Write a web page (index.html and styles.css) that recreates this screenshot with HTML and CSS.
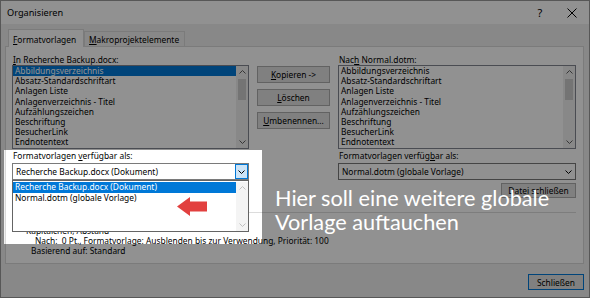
FILE: index.html
```html
<!DOCTYPE html>
<html lang="de">
<head>
<meta charset="utf-8">
<title>Organisieren</title>
<link rel="stylesheet" href="styles.css">
</head>
<body>
<div class="dialog">
  <div class="titlebar">
    <span class="title">Organisieren</span>
    <span class="tb-help">?</span>
    <span class="tb-close"><svg width="10" height="10" viewBox="0 0 10 10"><path d="M0.5 0.5 L9.5 9.5 M9.5 0.5 L0.5 9.5" stroke="#000" stroke-width="1" fill="none"/></svg></span>
  </div>
  <div class="tabstrip">
    <div class="tab active"><u>F</u>ormatvorlagen</div>
    <div class="tab"><u>M</u>akroprojektelemente</div>
  </div>
  <div class="tabpage">
    <div class="cols">
      <div class="col">
        <div class="label"><u>I</u>n Recherche Backup.docx:</div>
        <div class="listbox">
          <ul class="items">
            <li class="sel">Abbildungsverzeichnis</li>
            <li>Absatz-Standardschriftart</li>
            <li>Anlagen Liste</li>
            <li>Anlagenverzeichnis - Titel</li>
            <li>Aufzählungszeichen</li>
            <li>Beschriftung</li>
            <li>BesucherLink</li>
            <li>Endnotentext</li>
          </ul>
          <div class="vscroll">
            <span class="sarrow"><svg width="7" height="4" viewBox="0 0 7 4"><path d="M0.5 3.5 L3.5 0.5 L6.5 3.5" stroke="#606060" fill="none"/></svg></span>
            <span class="thumb"></span>
            <span class="strack"></span>
            <span class="sarrow"><svg width="7" height="4" viewBox="0 0 7 4"><path d="M0.5 0.5 L3.5 3.5 L6.5 0.5" stroke="#606060" fill="none"/></svg></span>
          </div>
        </div>
        <div class="label label2">Formatvorlagen <u>v</u>erfügbar als:</div>
        <div class="combo open">
          <span class="combo-text">Recherche Backup.docx (Dokument)</span>
          <span class="combo-btn"><svg width="7" height="4" viewBox="0 0 7 4"><path d="M0.5 0.5 L3.5 3.5 L6.5 0.5" stroke="#000" fill="none"/></svg></span>
          <div class="popup">
            <ul class="items">
              <li class="sel">Recherche Backup.docx (Dokument)</li>
              <li>Normal.dotm (globale Vorlage)</li>
            </ul>
            <div class="vscroll light">
              <span class="sarrow"><svg width="7" height="4" viewBox="0 0 7 4"><path d="M0.5 3.5 L3.5 0.5 L6.5 3.5" stroke="#c0c0c0" fill="none"/></svg></span>
              <span class="strack"></span>
              <span class="sarrow"><svg width="7" height="4" viewBox="0 0 7 4"><path d="M0.5 0.5 L3.5 3.5 L6.5 0.5" stroke="#c0c0c0" fill="none"/></svg></span>
            </div>
          </div>
        </div>
        <div class="btnrow"><span class="btn small">Datei schließen</span></div>
      </div>
      <div class="mid">
        <span class="btn"><u>K</u>opieren -&gt;</span>
        <span class="btn"><u>L</u>öschen</span>
        <span class="btn"><u>U</u>mbenennen...</span>
      </div>
      <div class="col">
        <div class="label">Nac<u>h</u> Normal.dotm:</div>
        <div class="listbox">
          <ul class="items">
            <li>Abbildungsverzeichnis</li>
            <li>Absatz-Standardschriftart</li>
            <li>Anlagen Liste</li>
            <li>Anlagenverzeichnis - Titel</li>
            <li>Aufzählungszeichen</li>
            <li>Beschriftung</li>
            <li>BesucherLink</li>
            <li>Endnotentext</li>
          </ul>
          <div class="vscroll">
            <span class="sarrow"><svg width="7" height="4" viewBox="0 0 7 4"><path d="M0.5 3.5 L3.5 0.5 L6.5 3.5" stroke="#606060" fill="none"/></svg></span>
            <span class="thumb"></span>
            <span class="strack"></span>
            <span class="sarrow"><svg width="7" height="4" viewBox="0 0 7 4"><path d="M0.5 0.5 L3.5 3.5 L6.5 0.5" stroke="#606060" fill="none"/></svg></span>
          </div>
        </div>
        <div class="label label2">Formatvorlagen verfüg<u>b</u>ar als:</div>
        <div class="combo">
          <span class="combo-text">Normal.dotm (globale Vorlage)</span>
          <span class="combo-btn plain"><svg width="7" height="4" viewBox="0 0 7 4"><path d="M0.5 0.5 L3.5 3.5 L6.5 0.5" stroke="#000" fill="none"/></svg></span>
        </div>
        <div class="btnrow"><span class="btn small">Datei schließen</span></div>
      </div>
    </div>
    <div class="desc-group">
      <div class="desc d1">Kapitälchen, Abstand</div>
      <div class="desc d2">Nach:&nbsp; 0 Pt., Formatvorlage: Ausblenden bis zur Verwendung, Priorität: 100</div>
      <div class="desc d3">Basierend auf: Standard</div>
    </div>
  </div>
  <div class="footer"><span class="btn default">Schließen</span></div>

  <div class="spotlight"></div>
  <svg class="arrow" width="30" height="19" viewBox="0 0 30 19"><polygon points="0,9.5 13,0 13,4.5 30,4.5 30,14.5 13,14.5 13,19" fill="#e2403f"/></svg>
  <div class="note">Hier soll eine weitere globale<br>Vorlage auftauchen</div>
</div>
</body>
</html>
```
FILE: styles.css
```css
* { box-sizing: border-box; }
html, body { margin: 0; padding: 0; }
body {
  width: 590px;
  height: 298px;
  overflow: hidden;
  font-family: "Noto Sans", "Open Sans", sans-serif;
  font-size: 8.4px;
  color: #000;
  background: #fff;
}
u { text-decoration: underline; text-underline-offset: 1px; }
ul { list-style: none; margin: 0; padding: 0; }

.dialog {
  position: relative;
  width: 590px;
  height: 298px;
  background: #f0f0f0;
  border: 1px solid #9a9a9a;
  display: flex;
  flex-direction: column;
}

/* title bar */
.titlebar {
  height: 23px;
  flex: none;
  background: #fff;
  display: flex;
  align-items: center;
  padding-left: 6px;
  font-size: 9.2px;
}
.title { flex: 1; }
.tb-help { width: 14px; font-size: 11px; margin-right: 20px; text-align: center; }
.tb-close { width: 10px; height: 10px; margin-right: 12px; display: flex; }

/* tabs */
.tabstrip {
  height: 22px;
  flex: none;
  display: flex;
  align-items: flex-end;
  padding-left: 7px;
  position: relative;
  z-index: 1;
}
.tab {
  height: 15px;
  border: 1px solid #d9d9d9;
  border-bottom: none;
  background: #f0f0f0;
  display: flex;
  align-items: center;
  padding-left: 4px;
  width: 101px;
}
.tab.active {
  width: 76px;
  background: #fff;
  margin-bottom: -1px;
  height: 18px;
  padding-top: 1px;
}

.tabpage {
  height: 218px;
  flex: none;
  margin: 0 5px 0 4px;
  background: #fff;
  border: 1px solid #d9d9d9;
  padding: 7px 7px 0 6px;
}
.cols {
  display: grid;
  grid-template-columns: 237px 73px 238px;
  column-gap: 8px;
}
.col { display: flex; flex-direction: column; }
.label { height: 11px; line-height: 11px; padding-left: 1px; white-space: nowrap; }
.label2 { height: 14px; line-height: 14px; }

.listbox {
  height: 84px;
  border: 1px solid #828790;
  background: #fff;
  display: flex;
}
.items { flex: 1; min-width: 0; }
.items li {
  height: 10.2px;
  line-height: 10.2px;
  padding-left: 2px;
  white-space: nowrap;
  overflow: hidden;
}
.items li.sel { background: #0078d7; color: #fff; }

.vscroll {
  width: 12px;
  flex: none;
  background: #f0f0f0;
  display: flex;
  flex-direction: column;
}
.vscroll.light { background: #f4f4f4; }
.sarrow { height: 12px; display: flex; align-items: center; justify-content: center; flex: none; }
.thumb { height: 21px; margin: 1px 2px 0; background: #cdcdcd; flex: none; }
.strack { flex: 1; }

.combo {
  position: relative;
  height: 17px;
  border: 1px solid #7a7a7a;
  background: #fff;
  display: flex;
  align-items: center;
}
.combo-text { flex: 1; padding-left: 3px; white-space: nowrap; }
.combo-btn {
  width: 13px;
  height: 15px;
  display: flex;
  align-items: center;
  justify-content: center;
  border: 1px solid #0078d7;
  background: #cce4f7;
}
.combo-btn.plain { border: 1px solid transparent; background: #fff; }

.popup {
  position: absolute;
  left: -1px;
  right: -1px;
  top: 16px;
  height: 52px;
  border: 1px solid #646464;
  background: #fff;
  display: flex;
  padding-top: 1px;
  z-index: 3;
}
.popup .items li { height: 10.5px; line-height: 10.5px; }

.btnrow { display: flex; justify-content: flex-end; margin-top: 3px; }
.btn {
  display: flex;
  align-items: center;
  justify-content: center;
  height: 17px;
  background: #e1e1e1;
  border: 1px solid #adadad;
  white-space: nowrap;
}
.btn.small { height: 15px; width: 75px; }
.mid { display: flex; flex-direction: column; gap: 6px; padding-top: 12px; }

.desc-group {
  margin-top: 14px;
  border-top: 1px solid #dcdcdc;
  padding-top: 13px;
}
.desc { height: 10px; line-height: 10px; white-space: nowrap; }
.d1 { padding-left: 14px; }
.d2 { padding-left: 23px; }
.d3 { padding-left: 19px; }

.footer {
  flex: 1;
  display: flex;
  justify-content: flex-end;
  align-items: flex-start;
  padding: 10px 5px 0 0;
}
.btn.default { width: 56px; height: 16px; border-color: #0078d7; }

/* overlays */
.spotlight {
  position: absolute;
  left: 3px;
  top: 149px;
  width: 258px;
  height: 94px;
  box-shadow: 0 0 0 800px rgba(0, 0, 0, 0.43);
  z-index: 5;
  pointer-events: none;
}
.arrow {
  position: absolute;
  left: 176px;
  top: 196px;
  z-index: 6;
}
.note {
  position: absolute;
  left: 274px;
  top: 186px;
  font-family: Lato, "Noto Sans", sans-serif;
  font-size: 21.7px;
  line-height: 23.5px;
  color: #fff;
  white-space: nowrap;
  z-index: 6;
}
```
